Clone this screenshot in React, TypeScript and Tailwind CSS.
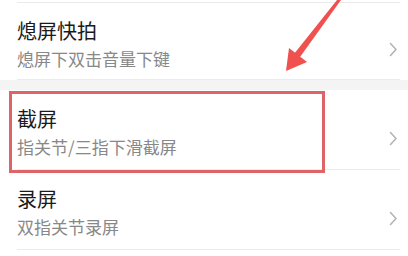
import React from 'react';

interface RowProps {
  title: string;
  desc: string;
  className?: string;
  children?: React.ReactNode;
}

function Chevron() {
  return (
    <svg width="9" height="15" viewBox="0 0 9 15" className="shrink-0">
      <polyline points="1.5,1.5 7,7.5 1.5,13.5" fill="none" stroke="#b4b4b4" strokeWidth="1.6" strokeLinecap="round" strokeLinejoin="round" />
    </svg>
  );
}

function Row({ title, desc, className = '', children }: RowProps) {
  return (
    <div className={`relative flex items-center justify-between pl-[17px] pr-[10px] ${className}`}>
      <div className="flex flex-col self-start">
        <p className="text-[20px] leading-[24px] text-[#1a1a1a]">{title}</p>
        <p className="mt-[5px] text-[17px] leading-[22px] text-[#888888]">{desc}</p>
      </div>
      <Chevron />
      <div className="absolute bottom-0 left-[17px] right-[8px] h-px bg-[#ebebeb]" />
      {children}
    </div>
  );
}

export default function App() {
  return (
    <div
      className="relative w-[408px] h-[256px] overflow-hidden bg-white"
      style={{ fontFamily: '"Noto Sans CJK SC", "Noto Sans", sans-serif' }}
    >
      {/* tail of the previous row */}
      <div className="relative h-[3px]">
        <div className="absolute bottom-0 left-[17px] right-[8px] h-px bg-[#ebebeb]" />
      </div>

      <Row title="熄屏快拍" desc="熄屏下双击音量下键" className="h-[77px] pt-[16px]" />

      <div className="h-[10px] bg-[#f4f4f4]" />

      <Row title="截屏" desc="指关节/三指下滑截屏" className="h-[80px] pt-[17px]">
        <div className="absolute left-[9px] top-[1px] w-[316px] h-[82px] border-[3px] border-[#df6468] pointer-events-none z-10" />
      </Row>

      <Row title="录屏" desc="双指关节录屏" className="h-[80px] pt-[17px]" />

      {/* annotation arrow */}
      <svg className="absolute left-0 top-0 pointer-events-none" width="408" height="256" viewBox="0 0 408 256">
        <polygon points="337,0 341,0 300,57 294,54" fill="#f0514f" />
        <polygon points="286,71 289,48 307,62" fill="#f0514f" />
      </svg>
    </div>
  );
}
